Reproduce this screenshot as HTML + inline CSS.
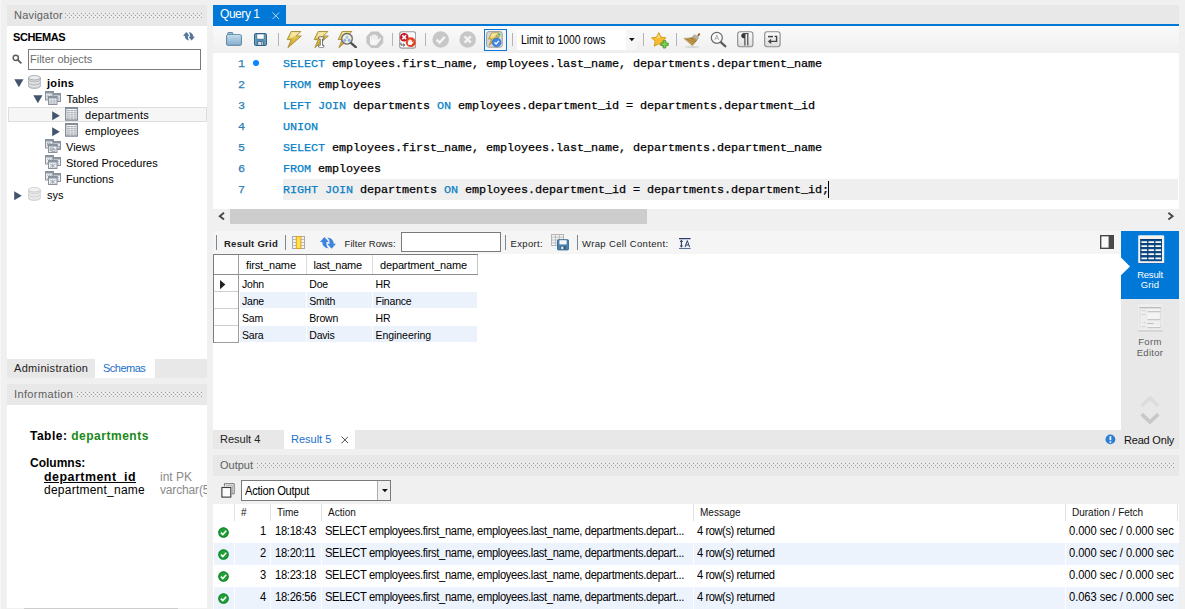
<!DOCTYPE html>
<html><head><meta charset="utf-8">
<style>
*{box-sizing:border-box;margin:0;padding:0}
html,body{width:1185px;height:609px;overflow:hidden;background:#f0f0f0;font-family:"Liberation Sans","DejaVu Sans",sans-serif;font-size:11px;color:#000}
.a{position:absolute;white-space:nowrap}
.t{position:absolute;white-space:nowrap;line-height:14px;height:14px}
.hdr{background:#e8e8e8}
.dots{position:absolute;height:7px;background-image:radial-gradient(circle,#bdbdbd 0.6px,transparent 0.8px),radial-gradient(circle,#bdbdbd 0.6px,transparent 0.8px);background-size:4px 4px;background-position:0 0,2px 2px}
.code{-webkit-text-stroke:.25px currentColor;font-family:"Liberation Mono","DejaVu Sans Mono",monospace;font-size:11.8px;letter-spacing:-0.08px;line-height:21px;height:21px;position:absolute;white-space:pre;left:283px;color:#000}
.k{color:#067fc8}
.ln{-webkit-text-stroke:.25px currentColor;position:absolute;font-family:"Liberation Mono",monospace;font-size:11.8px;line-height:21px;height:21px;left:237.5px;color:#2b7fb5;width:8px;text-align:center}
.g{position:absolute;white-space:nowrap;line-height:17px;height:17px;font-size:10.5px;letter-spacing:-.2px}
.h{font-size:11px;top:257px}
.oh{font-size:10px;top:506px;color:#111}
.i{font-size:12px;line-height:16px;height:16px}
.s{left:1121px;width:58px;text-align:center;font-size:9.5px}
.r{font-size:9.5px;top:237px;color:#222}
.o{position:absolute;white-space:nowrap;line-height:22px;height:22px;font-size:12px;letter-spacing:-0.3px;transform-origin:0 50%;transform:scaleX(.93)}
</style></head><body>
<!-- LEFT PANEL -->
<div class="a hdr" style="left:7px;top:5px;width:200px;height:21px"></div>
<div class="t" style="left:14px;top:8px;color:#5e5e5e;letter-spacing:.2px">Navigator</div>
<svg class="a" style="left:65px;top:13px" width="137" height="5"><defs><pattern id="d1" width="4" height="4" patternUnits="userSpaceOnUse"><rect x="0" y="0" width="1" height="1" fill="#9c9c9c"/><rect x="2" y="2" width="1" height="1" fill="#9c9c9c"/><rect x="2" y="0" width="1" height="1" fill="#f7f7f7"/><rect x="0" y="2" width="1" height="1" fill="#f7f7f7"/></pattern></defs><rect width="137" height="5" fill="url(#d1)"/></svg>
<div class="a" style="left:7px;top:26px;width:200px;height:333px;background:#fff"></div>
<div class="t" style="left:13px;top:30px;font-weight:bold;letter-spacing:-.4px">SCHEMAS</div>
<div class="a" style="left:28px;top:49px;width:173px;height:21px;border:1px solid #7a7a7a;background:#fff"></div>
<div class="t" style="left:30px;top:52px;color:#6d6d6d">Filter objects</div>
<!-- tree -->
<div class="a" style="left:8px;top:107px;width:199px;height:15px;background:#f6f6f6;border:1px solid #dedede"></div>
<div class="t" style="left:47px;top:76px;font-weight:bold;letter-spacing:.3px">joins</div>
<div class="t" style="left:66.5px;top:92px">Tables</div>
<div class="t" style="left:85px;top:108px;letter-spacing:.27px">departments</div>
<div class="t" style="left:85px;top:124px;letter-spacing:.1px">employees</div>
<div class="t" style="left:66px;top:140px">Views</div>
<div class="t" style="left:66px;top:156px">Stored Procedures</div>
<div class="t" style="left:66px;top:172px">Functions</div>
<div class="t" style="left:47px;top:188px">sys</div>
<!-- left tabs -->
<div class="a hdr" style="left:7px;top:359px;width:200px;height:19px"></div>
<div class="a" style="left:95px;top:359px;width:60px;height:19px;background:#fff"></div>
<div class="t" style="left:14px;top:361px;color:#222;letter-spacing:.33px">Administration</div>
<div class="t" style="left:103px;top:361px;color:#1a6fc9;letter-spacing:-.5px">Schemas</div>
<div class="a hdr" style="left:7px;top:384px;width:200px;height:21px"></div>
<div class="t" style="left:14px;top:387px;color:#5e5e5e;letter-spacing:.38px">Information</div>
<svg class="a" style="left:77px;top:392px" width="125" height="5"><defs><pattern id="d2" width="4" height="4" patternUnits="userSpaceOnUse"><rect x="0" y="0" width="1" height="1" fill="#9c9c9c"/><rect x="2" y="2" width="1" height="1" fill="#9c9c9c"/><rect x="2" y="0" width="1" height="1" fill="#f7f7f7"/><rect x="0" y="2" width="1" height="1" fill="#f7f7f7"/></pattern></defs><rect width="125" height="5" fill="url(#d2)"/></svg>
<div class="a" style="left:7px;top:405px;width:200px;height:204px;background:#fff;overflow:hidden">
  <div class="t i" style="left:23px;top:22.5px;font-weight:bold;letter-spacing:.5px">Table: <span style="color:#178a17">departments</span></div>
  <div class="t i" style="left:23px;top:50.2px;font-weight:bold">Columns:</div>
  <div class="t i" style="left:37px;top:64.2px;font-weight:bold;text-decoration:underline;letter-spacing:.5px;transform-origin:0 0;transform:scaleX(1.032)">department_id</div>
  <div class="t i" style="left:37px;top:77.2px;letter-spacing:.24px">department_name</div>
  <div class="t i" style="left:153px;top:64.2px;color:#8a8a8a">int PK</div>
  <div class="t i" style="left:153px;top:77.2px;color:#8a8a8a;letter-spacing:-.15px">varchar(50)</div>
</div>
<div class="a" style="left:7px;top:608px;width:200px;height:1px;background:#f0f0f0"></div><div class="a" style="left:24px;top:608px;width:154px;height:1px;background:#cdcdcd"></div><div class="a" style="left:0;top:0;width:1px;height:609px;background:#f6f6f6"></div>

<!-- MAIN -->
<div class="a hdr" style="left:213px;top:5px;width:966px;height:19px"></div>
<div class="a" style="left:213px;top:5px;width:73px;height:19px;background:#0078d7"></div>
<div class="a" style="left:213px;top:24px;width:966px;height:2px;background:#0078d7"></div>
<div class="t" style="left:220px;top:7px;color:#fff;font-size:12px;letter-spacing:-.45px">Query 1</div>
<div class="a" style="left:213px;top:26px;width:966px;height:27px;background:linear-gradient(#fafafa,#efefef)"></div>
<!-- editor -->
<div class="a" style="left:213px;top:53px;width:966px;height:156px;background:#fff"></div>
<div class="a" style="left:283px;top:179px;width:895px;height:21px;background:#efefef"></div>
<div class="ln" style="top:54px">1</div><div class="ln" style="top:75px">2</div><div class="ln" style="top:96px">3</div><div class="ln" style="top:117px">4</div><div class="ln" style="top:138px">5</div><div class="ln" style="top:159px">6</div><div class="ln" style="top:180px">7</div>
<div class="a" style="left:253px;top:60px;width:6px;height:6px;border-radius:3px;background:#0a84ff"></div>
<div class="code" style="top:54px"><span class="k">SELECT</span> employees.first_name, employees.last_name, departments.department_name</div>
<div class="code" style="top:75px"><span class="k">FROM</span> employees</div>
<div class="code" style="top:96px"><span class="k">LEFT JOIN</span> departments <span class="k">ON</span> employees.department_id = departments.department_id</div>
<div class="code" style="top:117px"><span class="k">UNION</span></div>
<div class="code" style="top:138px"><span class="k">SELECT</span> employees.first_name, employees.last_name, departments.department_name</div>
<div class="code" style="top:159px"><span class="k">FROM</span> employees</div>
<div class="code" style="top:180px"><span class="k">RIGHT JOIN</span> departments <span class="k">ON</span> employees.department_id = departments.department_id;</div>
<div class="a" style="left:828px;top:181px;width:1px;height:17px;background:#000"></div>
<!-- h scrollbar -->
<div class="a" style="left:230px;top:209px;width:417px;height:15px;background:#cdcdcd"></div>
<!-- result toolbar -->
<div class="a" style="left:213px;top:231px;width:908px;height:23px;background:#f5f5f5"></div>
<div class="a" style="left:216px;top:235px;width:1px;height:15px;background:#7a8794"></div>
<div class="a" style="left:285px;top:235px;width:1px;height:15px;background:#7a8794"></div>
<div class="t r" style="left:224px;font-weight:bold;letter-spacing:.25px">Result Grid</div>
<div class="t r" style="left:344.5px;letter-spacing:.08px">Filter Rows:</div>
<div class="a" style="left:401px;top:232px;width:100px;height:20px;border:1px solid #7a7a7a;background:#fff"></div>
<div class="a" style="left:505px;top:235px;width:1px;height:15px;background:#7a8794"></div>
<div class="t r" style="left:510.5px;letter-spacing:.35px">Export:</div>
<div class="a" style="left:577px;top:235px;width:1px;height:15px;background:#7a8794"></div>
<div class="t r" style="left:582px;letter-spacing:.35px">Wrap Cell Content:</div>
<!-- grid area -->
<div class="a" style="left:213px;top:254px;width:908px;height:176px;background:#fff"></div>
<div class="a" style="left:213px;top:254px;width:265px;height:1px;background:#7d7d7d"></div>
<div class="a" style="left:213px;top:274px;width:265px;height:1px;background:#8e8e8e"></div>
<div class="a" style="left:213px;top:254px;width:1px;height:89px;background:#7d7d7d"></div>
<div class="a" style="left:238px;top:255px;width:1px;height:88px;background:#9c9c9c"></div>
<div class="a" style="left:306px;top:255px;width:1px;height:19px;background:#dcdcdc"></div>
<div class="a" style="left:372px;top:255px;width:1px;height:19px;background:#dcdcdc"></div>
<div class="a" style="left:477px;top:255px;width:1px;height:19px;background:#c8c8c8"></div>
<div class="a" style="left:214px;top:291px;width:24px;height:1px;background:#cfcfcf"></div>
<div class="a" style="left:214px;top:308px;width:24px;height:1px;background:#cfcfcf"></div>
<div class="a" style="left:214px;top:325px;width:24px;height:1px;background:#cfcfcf"></div>
<div class="a" style="left:214px;top:342px;width:24px;height:1px;background:#9c9c9c"></div>
<div class="a" style="left:239.5px;top:292px;width:66.5px;height:16px;background:#ecf2fc"></div>
<div class="a" style="left:307px;top:292px;width:65px;height:16px;background:#ecf2fc"></div>
<div class="a" style="left:373px;top:292px;width:104px;height:16px;background:#ecf2fc"></div>
<div class="a" style="left:239.5px;top:326px;width:66.5px;height:16px;background:#ecf2fc"></div>
<div class="a" style="left:307px;top:326px;width:65px;height:16px;background:#ecf2fc"></div>
<div class="a" style="left:373px;top:326px;width:104px;height:16px;background:#ecf2fc"></div>
<div class="g h" style="left:246px;letter-spacing:-.15px">first_name</div><div class="g h" style="left:313.5px;letter-spacing:-.28px">last_name</div><div class="g h" style="left:380px;letter-spacing:-.15px">department_name</div>
<div class="g" style="left:242px;top:276px">John</div><div class="g" style="left:309.3px;top:276px">Doe</div><div class="g" style="left:375.5px;top:276px">HR</div>
<div class="g" style="left:242px;top:293px">Jane</div><div class="g" style="left:309.3px;top:293px">Smith</div><div class="g" style="left:375.5px;top:293px">Finance</div>
<div class="g" style="left:242px;top:310px">Sam</div><div class="g" style="left:309.3px;top:310px">Brown</div><div class="g" style="left:375.5px;top:310px">HR</div>
<div class="g" style="left:242px;top:327px">Sara</div><div class="g" style="left:309.3px;top:327px">Davis</div><div class="g" style="left:375.5px;top:327px;letter-spacing:-.05px">Engineering</div>
<!-- side panel -->
<div class="a hdr" style="left:1121px;top:231px;width:58px;height:199px"></div>
<div class="a" style="left:1121px;top:231px;width:58px;height:68px;background:#0078d7"></div>
<div class="t s" style="top:267.7px;color:#fff;letter-spacing:-.2px">Result</div>
<div class="t s" style="top:277.6px;color:#fff;letter-spacing:.1px">Grid</div>
<div class="t s" style="top:334.7px;color:#5c5c5c;letter-spacing:.37px">Form</div>
<div class="t s" style="top:345.6px;color:#5c5c5c;letter-spacing:.28px">Editor</div>
<!-- result tabs -->
<div class="a hdr" style="left:213px;top:430px;width:966px;height:19px"></div>
<div class="a" style="left:284px;top:430px;width:71px;height:19px;background:#fff"></div>
<div class="t" style="left:220px;top:432px;color:#222">Result 4</div>
<div class="t" style="left:291px;top:432px;color:#1a6fc9">Result 5</div>
<div class="t" style="left:1124px;top:433px;color:#111;letter-spacing:-.2px">Read Only</div>
<!-- output -->
<div class="a hdr" style="left:213px;top:455px;width:966px;height:21px"></div>
<div class="t" style="left:220px;top:458px;color:#5e5e5e">Output</div>
<svg class="a" style="left:257px;top:463px" width="918" height="5"><defs><pattern id="d3" width="4" height="4" patternUnits="userSpaceOnUse"><rect x="0" y="0" width="1" height="1" fill="#9c9c9c"/><rect x="2" y="2" width="1" height="1" fill="#9c9c9c"/><rect x="2" y="0" width="1" height="1" fill="#f7f7f7"/><rect x="0" y="2" width="1" height="1" fill="#f7f7f7"/></pattern></defs><rect width="918" height="5" fill="url(#d3)"/></svg>
<div class="a" style="left:241px;top:480px;width:150px;height:21px;border:1px solid #7a7a7a;background:#fff"></div>
<div class="a" style="left:377px;top:481px;width:13px;height:19px;border-left:1px solid #adadad;background:#f0f0f0"></div>
<div class="o" style="left:245px;top:481px;line-height:21px;height:21px">Action Output</div>
<div class="a" style="left:213px;top:504px;width:966px;height:105px;background:#fff"></div>
<div class="a" style="left:214px;top:543px;width:965px;height:22px;background:#edf3fc"></div>
<div class="a" style="left:214px;top:587px;width:965px;height:22px;background:#edf3fc"></div>
<!-- output table -->
<div class="a" style="left:234px;top:504px;width:1px;height:17px;background:#e2e2e2"></div>
<div class="a" style="left:270px;top:504px;width:1px;height:17px;background:#e2e2e2"></div>
<div class="a" style="left:321px;top:504px;width:1px;height:17px;background:#e2e2e2"></div>
<div class="a" style="left:693px;top:504px;width:1px;height:17px;background:#e2e2e2"></div>
<div class="a" style="left:1065px;top:504px;width:1px;height:17px;background:#e2e2e2"></div>
<div class="a" style="left:1177px;top:504px;width:1px;height:17px;background:#e2e2e2"></div>
<div class="a" style="left:234px;top:521px;width:1px;height:88px;background:#fff"></div>
<div class="a" style="left:270px;top:521px;width:1px;height:88px;background:#fff"></div>
<div class="a" style="left:321px;top:521px;width:1px;height:88px;background:#fff"></div>
<div class="a" style="left:693px;top:521px;width:1px;height:88px;background:#fff"></div>
<div class="a" style="left:1065px;top:521px;width:1px;height:88px;background:#fff"></div>
<div class="t oh" style="left:241px">#</div>
<div class="t oh" style="left:277px">Time</div>
<div class="t oh" style="left:328px">Action</div>
<div class="t oh" style="left:700px">Message</div>
<div class="t oh" style="left:1072px">Duration / Fetch</div>
<svg class="a" style="left:218px;top:527px" width="11" height="11" viewBox="0 0 11 11"><circle cx="5.5" cy="5.5" r="5.3" fill="#21a038"/><circle cx="5.5" cy="5.5" r="4.6" fill="none" stroke="#127a26" stroke-width=".8"/><path d="M2.9 5.6 L4.8 7.5 L8.2 3.8" fill="none" stroke="#fff" stroke-width="1.6"/></svg>
<div class="o" style="left:236px;top:520px;width:30px;text-align:right;transform-origin:100% 50%">1</div>
<div class="o" style="left:274.5px;top:520px;letter-spacing:-.3px">18:18:43</div>
<div class="o" style="left:325px;top:520px;letter-spacing:-.357px">SELECT employees.first_name, employees.last_name, departments.depart...</div>
<div class="o" style="left:697px;top:520px;letter-spacing:-.468px">4 row(s) returned</div>
<div class="o" style="left:1069px;top:520px;letter-spacing:-.067px">0.000 sec / 0.000 sec</div>
<svg class="a" style="left:218px;top:549px" width="11" height="11" viewBox="0 0 11 11"><circle cx="5.5" cy="5.5" r="5.3" fill="#21a038"/><circle cx="5.5" cy="5.5" r="4.6" fill="none" stroke="#127a26" stroke-width=".8"/><path d="M2.9 5.6 L4.8 7.5 L8.2 3.8" fill="none" stroke="#fff" stroke-width="1.6"/></svg>
<div class="o" style="left:236px;top:542px;width:30px;text-align:right;transform-origin:100% 50%">2</div>
<div class="o" style="left:274.5px;top:542px;letter-spacing:-.3px">18:20:11</div>
<div class="o" style="left:325px;top:542px;letter-spacing:-.357px">SELECT employees.first_name, employees.last_name, departments.depart...</div>
<div class="o" style="left:697px;top:542px;letter-spacing:-.468px">4 row(s) returned</div>
<div class="o" style="left:1069px;top:542px;letter-spacing:-.067px">0.000 sec / 0.000 sec</div>
<svg class="a" style="left:218px;top:571px" width="11" height="11" viewBox="0 0 11 11"><circle cx="5.5" cy="5.5" r="5.3" fill="#21a038"/><circle cx="5.5" cy="5.5" r="4.6" fill="none" stroke="#127a26" stroke-width=".8"/><path d="M2.9 5.6 L4.8 7.5 L8.2 3.8" fill="none" stroke="#fff" stroke-width="1.6"/></svg>
<div class="o" style="left:236px;top:564px;width:30px;text-align:right;transform-origin:100% 50%">3</div>
<div class="o" style="left:274.5px;top:564px;letter-spacing:-.3px">18:23:18</div>
<div class="o" style="left:325px;top:564px;letter-spacing:-.357px">SELECT employees.first_name, employees.last_name, departments.depart...</div>
<div class="o" style="left:697px;top:564px;letter-spacing:-.468px">4 row(s) returned</div>
<div class="o" style="left:1069px;top:564px;letter-spacing:-.067px">0.000 sec / 0.000 sec</div>
<svg class="a" style="left:218px;top:593px" width="11" height="11" viewBox="0 0 11 11"><circle cx="5.5" cy="5.5" r="5.3" fill="#21a038"/><circle cx="5.5" cy="5.5" r="4.6" fill="none" stroke="#127a26" stroke-width=".8"/><path d="M2.9 5.6 L4.8 7.5 L8.2 3.8" fill="none" stroke="#fff" stroke-width="1.6"/></svg>
<div class="o" style="left:236px;top:586px;width:30px;text-align:right;transform-origin:100% 50%">4</div>
<div class="o" style="left:274.5px;top:586px;letter-spacing:-.3px">18:26:56</div>
<div class="o" style="left:325px;top:586px;letter-spacing:-.357px">SELECT employees.first_name, employees.last_name, departments.depart...</div>
<div class="o" style="left:697px;top:586px;letter-spacing:-.468px">4 row(s) returned</div>
<div class="o" style="left:1069px;top:586px;letter-spacing:-.067px">0.063 sec / 0.000 sec</div>
<!--ICONS-->
<svg class="a" style="left:13.7px;top:79px" width="10" height="9" viewBox="0 0 10 9"><path d="M0.3 0.3 L9.5 0.3 L4.9 8.2 Z" fill="#44546f"/></svg>
<svg class="a" style="left:32.7px;top:95px" width="10" height="9" viewBox="0 0 10 9"><path d="M0.3 0.3 L9.5 0.3 L4.9 8.2 Z" fill="#44546f"/></svg>
<svg class="a" style="left:52px;top:110.7px" width="9" height="10" viewBox="0 0 9 10"><path d="M0.2 0.2 L7.8 4.7 L0.2 9.2 Z" fill="#44546f"/></svg>
<svg class="a" style="left:52px;top:126.7px" width="9" height="10" viewBox="0 0 9 10"><path d="M0.2 0.2 L7.8 4.7 L0.2 9.2 Z" fill="#44546f"/></svg>
<svg class="a" style="left:14px;top:190.7px" width="9" height="10" viewBox="0 0 9 10"><path d="M0.2 0.2 L7.8 4.7 L0.2 9.2 Z" fill="#44546f"/></svg>
<svg class="a" style="left:27.6px;top:75px" width="13" height="14" viewBox="0 0 13 14"><path d="M0.5 2.7 V11 C0.5 12.5 3.2 13.4 6.4 13.4 C9.6 13.4 12.3 12.5 12.3 11 V2.7 Z" fill="#d4d6d8" stroke="#a4a8ad" stroke-width=".9"/><path d="M0.5 4.6 C0.5 6.1 3.2 7.0 6.4 7.0 C9.6 7.0 12.3 6.1 12.3 4.6" fill="none" stroke="#a4a8ad" stroke-width=".9"/><path d="M0.5 5.5 C0.5 7.0 3.2 7.9 6.4 7.9 C9.6 7.9 12.3 7.0 12.3 5.5" fill="none" stroke="#f6f6f6" stroke-width=".7"/><path d="M0.5 7.8 C0.5 9.3 3.2 10.2 6.4 10.2 C9.6 10.2 12.3 9.3 12.3 7.8" fill="none" stroke="#a4a8ad" stroke-width=".9"/><path d="M0.5 8.7 C0.5 10.2 3.2 11.1 6.4 11.1 C9.6 11.1 12.3 10.2 12.3 8.7" fill="none" stroke="#f6f6f6" stroke-width=".7"/><ellipse cx="6.4" cy="2.7" rx="5.9" ry="2.2" fill="#ececec" stroke="#a4a8ad" stroke-width=".9"/></svg>
<svg class="a" style="left:27.8px;top:187px" width="13" height="14" viewBox="0 0 13 14"><path d="M0.5 2.7 V11 C0.5 12.5 3.2 13.4 6.4 13.4 C9.6 13.4 12.3 12.5 12.3 11 V2.7 Z" fill="#e4e4e4" stroke="#cdcdcd" stroke-width=".9"/><path d="M0.5 4.6 C0.5 6.1 3.2 7.0 6.4 7.0 C9.6 7.0 12.3 6.1 12.3 4.6" fill="none" stroke="#cdcdcd" stroke-width=".9"/><path d="M0.5 5.5 C0.5 7.0 3.2 7.9 6.4 7.9 C9.6 7.9 12.3 7.0 12.3 5.5" fill="none" stroke="#f6f6f6" stroke-width=".7"/><path d="M0.5 7.8 C0.5 9.3 3.2 10.2 6.4 10.2 C9.6 10.2 12.3 9.3 12.3 7.8" fill="none" stroke="#cdcdcd" stroke-width=".9"/><path d="M0.5 8.7 C0.5 10.2 3.2 11.1 6.4 11.1 C9.6 11.1 12.3 10.2 12.3 8.7" fill="none" stroke="#f6f6f6" stroke-width=".7"/><ellipse cx="6.4" cy="2.7" rx="5.9" ry="2.2" fill="#f2f2f2" stroke="#cdcdcd" stroke-width=".9"/></svg>
<svg class="a" style="left:45px;top:91px" width="16" height="14" viewBox="0 0 16 14"><rect x="0.5" y="0.5" width="8" height="8.5" fill="#eceef1" stroke="#8a929e" stroke-width="1"/><rect x="0.5" y="0.5" width="8" height="1.6" fill="#8b94a1" stroke="#8a929e" stroke-width=".6"/><path d="M1 5.2 H8" stroke="#aab0b9" stroke-width=".7"/><path d="M3.0 3 V8.5" stroke="#aab0b9" stroke-width=".7"/><path d="M1 7.3 H8" stroke="#aab0b9" stroke-width=".7"/><path d="M6.0 3 V8.5" stroke="#aab0b9" stroke-width=".7"/><rect x="8.0" y="2.5" width="7.5" height="8" fill="#eceef1" stroke="#8a929e" stroke-width="1"/><rect x="8.0" y="2.5" width="7.5" height="1.6" fill="#8b94a1" stroke="#8a929e" stroke-width=".6"/><path d="M8.5 7.0 H15.0" stroke="#aab0b9" stroke-width=".7"/><path d="M10.3 5 V10" stroke="#aab0b9" stroke-width=".7"/><path d="M8.5 9.0 H15.0" stroke="#aab0b9" stroke-width=".7"/><path d="M13.2 5 V10" stroke="#aab0b9" stroke-width=".7"/><rect x="3.5" y="5.5" width="8.5" height="8" fill="#eceef1" stroke="#8a929e" stroke-width="1"/><rect x="3.5" y="5.5" width="8.5" height="1.6" fill="#8b94a1" stroke="#8a929e" stroke-width=".6"/><path d="M4 10.0 H11.5" stroke="#aab0b9" stroke-width=".7"/><path d="M6.2 8 V13" stroke="#aab0b9" stroke-width=".7"/><path d="M4 12.0 H11.5" stroke="#aab0b9" stroke-width=".7"/><path d="M9.3 8 V13" stroke="#aab0b9" stroke-width=".7"/></svg>
<svg class="a" style="left:45px;top:139px" width="16" height="14" viewBox="0 0 16 14"><rect x="0.5" y="0.5" width="8" height="8.5" fill="#eceef1" stroke="#8a929e" stroke-width="1"/><rect x="0.5" y="0.5" width="8" height="1.6" fill="#8b94a1" stroke="#8a929e" stroke-width=".6"/><rect x="2.2" y="4" width="3" height="2.4" fill="none" stroke="#838c98" stroke-width=".7"/><rect x="4" y="5.2" width="3" height="2.4" fill="#e3e6ea" stroke="#838c98" stroke-width=".7"/><rect x="8.0" y="2.5" width="7.5" height="8" fill="#eceef1" stroke="#8a929e" stroke-width="1"/><rect x="8.0" y="2.5" width="7.5" height="1.6" fill="#8b94a1" stroke="#8a929e" stroke-width=".6"/><rect x="9.7" y="6" width="3" height="2.4" fill="none" stroke="#838c98" stroke-width=".7"/><rect x="11.5" y="7.2" width="3" height="2.4" fill="#e3e6ea" stroke="#838c98" stroke-width=".7"/><rect x="3.5" y="5.5" width="8.5" height="8" fill="#eceef1" stroke="#8a929e" stroke-width="1"/><rect x="3.5" y="5.5" width="8.5" height="1.6" fill="#8b94a1" stroke="#8a929e" stroke-width=".6"/><rect x="5.2" y="9" width="3" height="2.4" fill="none" stroke="#838c98" stroke-width=".7"/><rect x="7" y="10.2" width="3" height="2.4" fill="#e3e6ea" stroke="#838c98" stroke-width=".7"/></svg>
<svg class="a" style="left:45px;top:155px" width="16" height="14" viewBox="0 0 16 14"><rect x="0.5" y="0.5" width="8" height="8.5" fill="#eceef1" stroke="#8a929e" stroke-width="1"/><rect x="0.5" y="0.5" width="8" height="1.6" fill="#8b94a1" stroke="#8a929e" stroke-width=".6"/><path d="M2 4 L7 8.0 M7 4 L2 8.0 M4.5 3.5 V8.5" stroke="#9aa2ad" stroke-width=".8"/><rect x="8.0" y="2.5" width="7.5" height="8" fill="#eceef1" stroke="#8a929e" stroke-width="1"/><rect x="8.0" y="2.5" width="7.5" height="1.6" fill="#8b94a1" stroke="#8a929e" stroke-width=".6"/><path d="M9.5 6 L14.0 9.5 M14.0 6 L9.5 9.5 M11.75 5.5 V10" stroke="#9aa2ad" stroke-width=".8"/><rect x="3.5" y="5.5" width="8.5" height="8" fill="#eceef1" stroke="#8a929e" stroke-width="1"/><rect x="3.5" y="5.5" width="8.5" height="1.6" fill="#8b94a1" stroke="#8a929e" stroke-width=".6"/><path d="M5 9 L10.5 12.5 M10.5 9 L5 12.5 M7.75 8.5 V13" stroke="#9aa2ad" stroke-width=".8"/></svg>
<svg class="a" style="left:45px;top:171px" width="16" height="14" viewBox="0 0 16 14"><rect x="0.5" y="0.5" width="8" height="8.5" fill="#eceef1" stroke="#8a929e" stroke-width="1"/><rect x="0.5" y="0.5" width="8" height="1.6" fill="#8b94a1" stroke="#8a929e" stroke-width=".6"/><path d="M2 4 L7 8.0 M7 4 L2 8.0 M4.5 3.5 V8.5" stroke="#9aa2ad" stroke-width=".8"/><rect x="8.0" y="2.5" width="7.5" height="8" fill="#eceef1" stroke="#8a929e" stroke-width="1"/><rect x="8.0" y="2.5" width="7.5" height="1.6" fill="#8b94a1" stroke="#8a929e" stroke-width=".6"/><path d="M9.5 6 L14.0 9.5 M14.0 6 L9.5 9.5 M11.75 5.5 V10" stroke="#9aa2ad" stroke-width=".8"/><rect x="3.5" y="5.5" width="8.5" height="8" fill="#eceef1" stroke="#8a929e" stroke-width="1"/><rect x="3.5" y="5.5" width="8.5" height="1.6" fill="#8b94a1" stroke="#8a929e" stroke-width=".6"/><path d="M5 9 L10.5 12.5 M10.5 9 L5 12.5 M7.75 8.5 V13" stroke="#9aa2ad" stroke-width=".8"/></svg>
<svg class="a" style="left:65px;top:107.2px" width="13" height="14" viewBox="0 0 13 14"><rect x="0.7" y="0.7" width="11.6" height="12.4" fill="#fafafa" stroke="#7f8896" stroke-width="1.3"/><rect x="0.7" y="0.3" width="11.6" height="1.6" fill="#7f8896"/><path d="M2 3.7 H11" stroke="#8f97a3" stroke-width="1"/><path d="M2 5.8 H11" stroke="#8f97a3" stroke-width="1"/><path d="M2 7.9 H11" stroke="#8f97a3" stroke-width="1"/><path d="M2 10 H11" stroke="#8f97a3" stroke-width="1"/><path d="M2 11.9 H11" stroke="#8f97a3" stroke-width="1"/><path d="M5.2 3 V12.5 M8.4 3 V12.5" stroke="#f0f1f3" stroke-width=".6"/></svg>
<svg class="a" style="left:65px;top:123.2px" width="13" height="14" viewBox="0 0 13 14"><rect x="0.7" y="0.7" width="11.6" height="12.4" fill="#fafafa" stroke="#7f8896" stroke-width="1.3"/><rect x="0.7" y="0.3" width="11.6" height="1.6" fill="#7f8896"/><path d="M2 3.7 H11" stroke="#8f97a3" stroke-width="1"/><path d="M2 5.8 H11" stroke="#8f97a3" stroke-width="1"/><path d="M2 7.9 H11" stroke="#8f97a3" stroke-width="1"/><path d="M2 10 H11" stroke="#8f97a3" stroke-width="1"/><path d="M2 11.9 H11" stroke="#8f97a3" stroke-width="1"/><path d="M5.2 3 V12.5 M8.4 3 V12.5" stroke="#f0f1f3" stroke-width=".6"/></svg>
<svg class="a" style="left:183px;top:31.8px" width="12" height="9" viewBox="0 0 12 9"><g fill="#56759a"><path d="M3.4 0 L0 3.7 L1.7 3.7 C1.7 6.4 3.5 8 6.4 8.4 C5 7 4.8 5.5 4.9 3.7 L6.6 3.7 Z"/><path transform="rotate(180 6 4.25)" d="M3.4 0 L0 3.7 L1.7 3.7 C1.7 6.4 3.5 8 6.4 8.4 C5 7 4.8 5.5 4.9 3.7 L6.6 3.7 Z"/></g></svg>
<svg class="a" style="left:12px;top:54px" width="10" height="10" viewBox="0 0 10 10"><circle cx="3.8" cy="3.8" r="2.6" fill="none" stroke="#5f5f5f" stroke-width="1.5"/><path d="M5.8 5.8 L8.8 8.8" stroke="#5f5f5f" stroke-width="1.9" stroke-linecap="round"/></svg>
<svg class="a" style="left:225px;top:31px" width="18" height="16" viewBox="0 0 18 16"><defs><linearGradient id="lg" x1="0" y1="0" x2="0" y2="1"><stop offset="0" stop-color="#f3e08a"/><stop offset=".5" stop-color="#dcbc3c"/><stop offset="1" stop-color="#c9a42a"/></linearGradient><linearGradient id="fg" x1="0" y1="0" x2="0" y2="1"><stop offset="0" stop-color="#c3dbec"/><stop offset="1" stop-color="#86aece"/></linearGradient><linearGradient id="bg" x1="0" y1="0" x2="0" y2="1"><stop offset="0" stop-color="#fdfdfd"/><stop offset="1" stop-color="#dcdcdc"/></linearGradient></defs><path d="M2.7 3.8 L2.7 2.3 Q2.7 1.5 3.5 1.5 L7 1.5 Q7.8 1.5 7.8 2.3 L7.8 3.8" fill="#9dc0da" stroke="#4f7f9f" stroke-width=".9"/><rect x="1.6" y="3.7" width="14.8" height="10.6" rx="1.1" fill="url(#fg)" stroke="#4f7f9f" stroke-width=".95"/><path d="M2.4 4.7 H15.6" stroke="#d9e9f4" stroke-width=".7"/></svg>
<svg class="a" style="left:254px;top:33px" width="13" height="13" viewBox="0 0 13 13"><rect x=".5" y=".5" width="12" height="12" rx="1.2" fill="#5b8fb1" stroke="#2f6388" stroke-width="1"/><path d="M1.6 1.2 V11.6 M11.4 1.2 V11.6" stroke="#7ba7c4" stroke-width=".7"/><rect x="2.9" y="1.1" width="7.2" height="5" rx=".6" fill="#fdfdfd" stroke="#3b6f93" stroke-width=".5"/><rect x="3.6" y="8.4" width="6" height="3.8" rx=".5" fill="#2f6388"/><rect x="4.2" y="9" width="4.6" height="2.9" fill="#e4e6e8"/><rect x="6.9" y="9.3" width=".9" height="2.3" fill="#3a5c78"/></svg>
<div class="a" style="left:278px;top:33px;width:1px;height:13px;background:#b4b4b4"></div>
<div class="a" style="left:392px;top:33px;width:1px;height:13px;background:#b4b4b4"></div>
<div class="a" style="left:425px;top:33px;width:1px;height:13px;background:#b4b4b4"></div>
<div class="a" style="left:512px;top:33px;width:1px;height:13px;background:#b4b4b4"></div>
<div class="a" style="left:643px;top:33px;width:1px;height:13px;background:#b4b4b4"></div>
<div class="a" style="left:676px;top:33px;width:1px;height:13px;background:#b4b4b4"></div>
<svg class="a" style="left:286px;top:30.8px" width="16" height="17.5" viewBox="0 0 16 17.5"><g transform="translate(0 0) scale(1)"><path d="M5.1 0.5 L14.8 0.5 L10.4 5 L15.3 5 L1.9 16.7 L5.2 8.6 L1.2 8.6 Z" fill="url(#lg)" stroke="#a88a35" stroke-width=".9" stroke-linejoin="round"/><path d="M5.9 1.5 L12.6 1.5 L8.6 5.6 L3.4 7.4 Z" fill="#f8efba" opacity=".75"/></g></svg>
<svg class="a" style="left:313.3px;top:30.8px" width="16" height="17.5" viewBox="0 0 16 17.5"><g transform="translate(0 0) scale(1)"><path d="M5.1 0.5 L14.8 0.5 L10.4 5 L15.3 5 L1.9 16.7 L5.2 8.6 L1.2 8.6 Z" fill="url(#lg)" stroke="#a88a35" stroke-width=".9" stroke-linejoin="round"/><path d="M5.9 1.5 L12.6 1.5 L8.6 5.6 L3.4 7.4 Z" fill="#f8efba" opacity=".75"/></g><path d="M6.6 7 H10 M6.6 15.2 H10 M8.3 7 V15.2" stroke="#4a4a4a" stroke-width="2.8" stroke-linecap="round"/><path d="M6.6 7 H10 M6.6 15.2 H10 M8.3 7 V15.2" stroke="#fff" stroke-width="1.4" stroke-linecap="round"/></svg>
<svg class="a" style="left:337.4px;top:30.8px" width="20" height="17.5" viewBox="0 0 20 17.5"><g transform="translate(0 0) scale(1)"><path d="M5.1 0.5 L14.8 0.5 L10.4 5 L15.3 5 L1.9 16.7 L5.2 8.6 L1.2 8.6 Z" fill="url(#lg)" stroke="#a88a35" stroke-width=".9" stroke-linejoin="round"/><path d="M5.9 1.5 L12.6 1.5 L8.6 5.6 L3.4 7.4 Z" fill="#f8efba" opacity=".75"/></g><circle cx="10" cy="7.8" r="5.3" fill="#f4f1de" stroke="#686868" stroke-width="1.3"/><circle cx="10" cy="6" r="1.5" fill="#a9c6ea"/><circle cx="7.8" cy="9.3" r="1.5" fill="#8db3e3"/><circle cx="12.2" cy="9.3" r="1.5" fill="#8db3e3"/><path d="M8.4 7.6 L10 6.8 L11.6 7.6" fill="none" stroke="#9fb6d6" stroke-width=".7"/><path d="M14.2 12.2 L18.8 16.2" stroke="#505050" stroke-width="2.3" stroke-linecap="round"/></svg>
<svg class="a" style="left:365.7px;top:30.8px" width="18" height="17.5" viewBox="0 0 18 17.5"><path d="M5.3 0.5 L12.3 0.5 L17.2 5.4 L17.2 12 L12.3 16.9 L5.3 16.9 L0.4 12 L0.4 5.4 Z" fill="#c4c4c4"/><g transform="translate(-.3 .9) scale(.92)"><g fill="#f6f6f6"><rect x="4.6" y="4.3" width="1.9" height="6.4" rx=".95"/><rect x="6.9" y="2.7" width="1.9" height="8" rx=".95"/><rect x="9.2" y="2.7" width="1.9" height="8" rx=".95"/><rect x="11.4" y="3.9" width="1.8" height="6.8" rx=".9"/><path d="M4.6 8.6 H13.2 L15.2 6.9 Q16.1 6.3 16.6 7 Q16.9 7.6 16.3 8.3 L12.8 13.2 Q11.8 14.6 10.2 14.6 H8 Q4.6 14.6 4.6 11.4 Z"/></g></g></svg>
<svg class="a" style="left:399px;top:30.6px" width="17.4" height="18" viewBox="0 0 17.4 18"><rect x=".7" y=".7" width="16" height="16.4" rx="2.2" fill="#fbfbfb" stroke="#9a9a9a" stroke-width="1.1"/><path d="M2 11.6 V14 H5.4 M4.2 12.6 L5.8 14 L4.2 15.4" fill="none" stroke="#444" stroke-width=".9"/><circle cx="5.2" cy="6.2" r="4.3" fill="#c3182b"/><path d="M3.3 4.3 L7.1 8.1 M7.1 4.3 L3.3 8.1" stroke="#fff" stroke-width="1.6"/><circle cx="11.8" cy="11.2" r="4.9" fill="#e2421f"/><g transform="translate(6.7 7.1) scale(.48)"><g fill="#fff"><rect x="4.6" y="4.3" width="1.9" height="6.4" rx=".95"/><rect x="6.9" y="2.7" width="1.9" height="8" rx=".95"/><rect x="9.2" y="2.7" width="1.9" height="8" rx=".95"/><rect x="11.4" y="3.9" width="1.8" height="6.8" rx=".9"/><path d="M4.6 8.6 H13.2 L15.2 6.9 Q16.1 6.3 16.6 7 Q16.9 7.6 16.3 8.3 L12.8 13.2 Q11.8 14.6 10.2 14.6 H8 Q4.6 14.6 4.6 11.4 Z"/></g></g></svg>
<svg class="a" style="left:432px;top:31px" width="17.5" height="17.5" viewBox="0 0 17.5 17.5"><circle cx="8.7" cy="8.5" r="8.3" fill="#c7c7c7"/><path d="M4.6 8.6 L7.6 11.6 L12.8 5.9" fill="none" stroke="#f4f4f4" stroke-width="2.3"/></svg>
<svg class="a" style="left:458.8px;top:31px" width="17.5" height="17.5" viewBox="0 0 17.5 17.5"><circle cx="8.7" cy="8.5" r="8.3" fill="#c7c7c7"/><path d="M5.6 5.4 L11.8 11.6 M11.8 5.4 L5.6 11.6" fill="none" stroke="#f4f4f4" stroke-width="2.3"/></svg>
<div class="a" style="left:484px;top:29px;width:23px;height:22px;border:1.5px solid #0a78d6;background:#f4f4f4"></div>
<svg class="a" style="left:486.4px;top:31px" width="17" height="17" viewBox="0 0 17 17"><rect x=".6" y=".6" width="15.6" height="15.6" rx="2.4" fill="#d8d8d8" stroke="#9c9c9c" stroke-width="1"/><g transform="translate(1.6 1.4) scale(0.78)"><path d="M5.1 0.5 L14.8 0.5 L10.4 5 L15.3 5 L1.9 16.7 L5.2 8.6 L1.2 8.6 Z" fill="url(#lg)" stroke="#a88a35" stroke-width=".9" stroke-linejoin="round"/><path d="M5.9 1.5 L12.6 1.5 L8.6 5.6 L3.4 7.4 Z" fill="#f8efba" opacity=".75"/></g><circle cx="10.6" cy="11.4" r="4.4" fill="#3f86e4" stroke="#2a68c2" stroke-width=".6"/><path d="M8.5 11.4 L10.1 13 L12.8 9.9" fill="none" stroke="#fff" stroke-width="1.3"/><circle cx="13.3" cy="3.6" r="1.2" fill="#3ccf3c"/></svg>
<div class="a" style="left:517px;top:29.5px;width:120px;height:20.5px;background:#fff"></div><div class="a" style="left:626px;top:30px;width:11px;height:19.5px;background:#f6f6f6"></div>
<svg class="a" style="left:628.6px;top:38px" width="6" height="4" viewBox="0 0 6 4"><path d="M0 0 H5.6 L2.8 3.2 Z" fill="#111"/></svg>
<div class="t" style="left:521.4px;top:32.8px;font-size:12px;line-height:15px;height:15px;transform-origin:0 0;transform:scaleX(.868);color:#000">Limit to 1000 rows</div>
<svg class="a" style="left:650.6px;top:32.4px" width="18" height="17" viewBox="0 0 18 17"><path d="M7.8 0.6 L10 5.2 L15 5.8 L11.4 9.2 L12.4 14.2 L7.8 11.8 L3.2 14.2 L4.2 9.2 L0.6 5.8 L5.6 5.2 Z" fill="#f6bc30" stroke="#d4951a" stroke-width=".9" stroke-linejoin="round"/><path d="M7.8 2.2 L9.2 5.8 L5.8 6.4 Z" fill="#fbe08a"/><path d="M12.2 8.6 h2.6 v2.4 h2.4 v2.6 h-2.4 v2.4 h-2.6 v-2.4 h-2.4 v-2.6 h2.4 Z" fill="#7ccf52" stroke="#3f8f25" stroke-width=".8"/></svg>
<svg class="a" style="left:683px;top:32px" width="18" height="16" viewBox="0 0 18 16"><ellipse cx="9" cy="15" rx="7.6" ry=".7" fill="#cfcfcf"/><path d="M14.2 3.4 L15.6 1.6 Q16.4 .9 17 1.6 Q17.5 2.3 16.8 3 L15.2 4.4 Z" fill="#8b5a1e"/><path d="M11.2 2.6 L15.6 5.2 L13.8 8.4 L9.4 5.6 Z" fill="#b9b4aa" stroke="#8f8a80" stroke-width=".5"/><path d="M9.6 5.2 L14 8 L9.4 13.6 L1 6.4 Q6 6.6 9.6 5.2 Z" fill="#cfa95a" stroke="#a27f3a" stroke-width=".6"/><path d="M3.2 7.6 L10 6.2 M5 9.2 L11.6 7 M6.8 10.8 L12.8 8 M8.4 12.4 L13.4 8.8" stroke="#8f6a2a" stroke-width=".75"/></svg>
<svg class="a" style="left:710px;top:31px" width="18" height="17" viewBox="0 0 18 17"><circle cx="6.8" cy="6.8" r="5.5" fill="#fbfbfb" stroke="#6a6a6a" stroke-width="1.25"/><path d="M4.8 9 L6.8 3.9 L8.8 9 M5.6 7.3 H8" fill="none" stroke="#a8a8a8" stroke-width=".9"/><path d="M11 11.4 L15.4 15.4" stroke="#5a5a5a" stroke-width="2.1" stroke-linecap="round"/></svg>
<svg class="a" style="left:737px;top:31px" width="17" height="16.5" viewBox="0 0 17 16.5"><defs><linearGradient id="lg2" x1="0" y1="0" x2="0" y2="1"><stop offset="0" stop-color="#f3e08a"/><stop offset=".5" stop-color="#dcbc3c"/><stop offset="1" stop-color="#c9a42a"/></linearGradient><linearGradient id="fg2" x1="0" y1="0" x2="0" y2="1"><stop offset="0" stop-color="#c3dbec"/><stop offset="1" stop-color="#86aece"/></linearGradient><linearGradient id="bg2" x1="0" y1="0" x2="0" y2="1"><stop offset="0" stop-color="#fdfdfd"/><stop offset="1" stop-color="#dcdcdc"/></linearGradient></defs><rect x=".7" y=".7" width="15.2" height="15" rx="2.4" fill="url(#bg2)" stroke="#8a8a8a" stroke-width="1.1"/><path d="M5.6 2.7 H11.6" stroke="#3a3a3a" stroke-width="1"/><path d="M7.9 2.7 V14.4 M10.8 2.7 V14.4" stroke="#3a3a3a" stroke-width="1.1"/><path d="M8 2.4 H6.6 A2.4 2.4 0 0 0 6.6 7.3 H8 Z" fill="#3a3a3a"/></svg>
<svg class="a" style="left:764px;top:31px" width="17" height="16.5" viewBox="0 0 17 16.5"><defs><linearGradient id="lg3" x1="0" y1="0" x2="0" y2="1"><stop offset="0" stop-color="#f3e08a"/><stop offset=".5" stop-color="#dcbc3c"/><stop offset="1" stop-color="#c9a42a"/></linearGradient><linearGradient id="fg3" x1="0" y1="0" x2="0" y2="1"><stop offset="0" stop-color="#c3dbec"/><stop offset="1" stop-color="#86aece"/></linearGradient><linearGradient id="bg3" x1="0" y1="0" x2="0" y2="1"><stop offset="0" stop-color="#fdfdfd"/><stop offset="1" stop-color="#dcdcdc"/></linearGradient></defs><rect x=".7" y=".7" width="15.4" height="15" rx="2.4" fill="url(#bg3)" stroke="#8a8a8a" stroke-width="1.1"/><path d="M4 5.6 H9" stroke="#444" stroke-width="1.5"/><path d="M10.6 5.4 H12.6 V10.4 H6.4" fill="none" stroke="#444" stroke-width="1.4"/><path d="M7.2 7.8 L3.8 10.4 L7.2 13 Z" fill="#444"/></svg>
<svg class="a" style="left:272px;top:11.7px" width="7.6" height="7.6" viewBox="0 0 7.6 7.6"><path d="M0.5 0.5 L7.1 7.1 M7.1 0.5 L0.5 7.1" stroke="#cfe2f5" stroke-width="0.9"/></svg>
<svg class="a" style="left:340.5px;top:436px" width="7.8" height="7.8" viewBox="0 0 7.8 7.8"><path d="M0.5 0.5 L7.3 7.3 M7.3 0.5 L0.5 7.3" stroke="#4c4c4c" stroke-width="1"/></svg>
<svg class="a" style="left:292px;top:236px" width="13" height="13" viewBox="0 0 13 13"><rect x=".5" y=".5" width="12" height="12" fill="#f4f4f4" stroke="#a9a9a9" stroke-width="1"/><path d="M1 3.5 H12" stroke="#b5b5b5" stroke-width=".9"/><path d="M1 6.5 H12" stroke="#b5b5b5" stroke-width=".9"/><path d="M1 9.5 H12" stroke="#b5b5b5" stroke-width=".9"/><rect x="4.3" y=".5" width="4.6" height="12" fill="#ffe24a" stroke="#e0a020" stroke-width="1"/></svg>
<svg class="a" style="left:320px;top:237.4px" width="16" height="12" viewBox="0 0 16 12"><g fill="#3d84e2"><path d="M4.4 0 L0 5 L2.3 5 C2.3 8.6 4.6 10.8 8.6 11.4 C6.6 9.4 6.3 7.4 6.4 5 L8.8 5 Z"/><path transform="rotate(180 8 5.9)" d="M4.4 0 L0 5 L2.3 5 C2.3 8.6 4.6 10.8 8.6 11.4 C6.6 9.4 6.3 7.4 6.4 5 L8.8 5 Z"/></g></svg>
<svg class="a" style="left:551.4px;top:234.4px" width="18.5" height="16.5" viewBox="0 0 18.5 16.5"><rect x=".5" y=".5" width="12" height="11" fill="#f2f2f2" stroke="#b0b0b0" stroke-width=".9"/><path d="M.5 3.2 H12.5" stroke="#b8b8b8" stroke-width=".8"/><path d="M.5 6 H12.5" stroke="#b8b8b8" stroke-width=".8"/><path d="M.5 8.8 H12.5" stroke="#b8b8b8" stroke-width=".8"/><path d="M4.5 .5 V11.5" stroke="#b8b8b8" stroke-width=".8"/><path d="M8.5 .5 V11.5" stroke="#b8b8b8" stroke-width=".8"/><g transform="translate(6 5.2)"><rect x=".5" y=".5" width="11" height="10.2" rx=".8" fill="#4a82ab" stroke="#386c93" stroke-width=".9"/><rect x="2.4" y="1" width="7.2" height="4.2" fill="#f4f7fa"/><rect x="3.2" y="6.8" width="5.6" height="3.6" fill="#2f5f85"/><rect x="3.9" y="7.4" width="2.6" height="2.6" fill="#d9dde2"/></g></svg>
<svg class="a" style="left:679px;top:237.6px" width="12" height="11.5" viewBox="0 0 12 11.5"><path d="M0 .6 H11.6 M0 10.8 H11.6" stroke="#2d4272" stroke-width="1.1"/><path d="M2.4 2.4 V9" stroke="#2d4272" stroke-width="1.1"/><path d="M.7 4 L2.4 1.6 L4.1 4 Z M.7 7.4 L2.4 9.8 L4.1 7.4 Z" fill="#2d4272"/><path d="M6 9.2 L8.3 2.6 L10.6 9.2 M6.9 7 H9.7" fill="none" stroke="#2d4272" stroke-width="1"/></svg>
<svg class="a" style="left:1100px;top:235px" width="14" height="14" viewBox="0 0 14 14"><rect x=".7" y=".7" width="12.6" height="12.6" fill="#fafafa" stroke="#3c3c3c" stroke-width="1.3"/><rect x="8.6" y=".7" width="4.7" height="12.6" fill="#4a4a4a"/></svg>
<svg class="a" style="left:219.6px;top:279.8px" width="6" height="10" viewBox="0 0 6 10"><path d="M0 0 L5.4 4.6 L0 9.2 Z" fill="#222"/></svg>
<svg class="a" style="left:1121px;top:257px" width="10" height="19" viewBox="0 0 10 19"><path d="M0 0.6 L9 9.4 L0 18.2 Z" fill="#fff"/></svg>
<svg class="a" style="left:1137.6px;top:235px" width="27" height="29" viewBox="0 0 27 29"><rect x=".2" y=".2" width="26" height="28" rx="1.3" fill="#f5f2ee"/><path d="M.8 28.5 H25.6" stroke="#0a5bb0" stroke-width=".8"/><rect x="2.2" y="4" width="21.8" height="22.2" fill="#0b4b8c"/><path d="M2.2 4.6 H24" stroke="#063a70" stroke-width="1"/><rect x="3.4" y="6.20" width="5.7" height="1.9" rx=".4" fill="#fbf8f3"/><rect x="10.4" y="6.20" width="5.7" height="1.9" rx=".4" fill="#fbf8f3"/><rect x="17.4" y="6.20" width="5.7" height="1.9" rx=".4" fill="#fbf8f3"/><path d="M2.2 8.649999999999999 H24" stroke="#063a70" stroke-width="1"/><rect x="3.4" y="10.25" width="5.7" height="1.9" rx=".4" fill="#fbf8f3"/><rect x="10.4" y="10.25" width="5.7" height="1.9" rx=".4" fill="#fbf8f3"/><rect x="17.4" y="10.25" width="5.7" height="1.9" rx=".4" fill="#fbf8f3"/><path d="M2.2 12.7 H24" stroke="#063a70" stroke-width="1"/><rect x="3.4" y="14.30" width="5.7" height="1.9" rx=".4" fill="#fbf8f3"/><rect x="10.4" y="14.30" width="5.7" height="1.9" rx=".4" fill="#fbf8f3"/><rect x="17.4" y="14.30" width="5.7" height="1.9" rx=".4" fill="#fbf8f3"/><path d="M2.2 16.75 H24" stroke="#063a70" stroke-width="1"/><rect x="3.4" y="18.35" width="5.7" height="1.9" rx=".4" fill="#fbf8f3"/><rect x="10.4" y="18.35" width="5.7" height="1.9" rx=".4" fill="#fbf8f3"/><rect x="17.4" y="18.35" width="5.7" height="1.9" rx=".4" fill="#fbf8f3"/><path d="M2.2 20.799999999999997 H24" stroke="#063a70" stroke-width="1"/><rect x="3.4" y="22.40" width="5.7" height="1.9" rx=".4" fill="#fbf8f3"/><rect x="10.4" y="22.40" width="5.7" height="1.9" rx=".4" fill="#fbf8f3"/><rect x="17.4" y="22.40" width="5.7" height="1.9" rx=".4" fill="#fbf8f3"/></svg>
<svg class="a" style="left:1137.4px;top:303px" width="27" height="29" viewBox="0 0 27 29"><rect x=".4" y=".4" width="26" height="27.4" rx="1.4" fill="#eeeeee" stroke="#e2e2e2" stroke-width=".6"/><path d="M1 27.9 H25.8" stroke="#c6c6c6" stroke-width="1.1"/><path d="M2.4 4.7 H24.2" stroke="#b6b6b6" stroke-width="1.2"/><path d="M2.8 5 V25.6 M23.9 5 V25.6" stroke="#d9d9d9" stroke-width=".7"/><path d="M4.4 7.7 H9 M4.4 11.7 H9 M6.2 19.7 H9 M4.4 23.7 H9" stroke="#cdcdcd" stroke-width=".8"/><rect x="10.4" y="6.2" width="12.999999999999998" height="2.2" fill="#f4f4f4"/><path d="M10.4 8.700000000000001 H23.4" stroke="#b8b8b8" stroke-width=".9"/><path d="M23.4 6.2 V8.4" stroke="#d4d4d4" stroke-width=".6"/><rect x="10.4" y="10.2" width="12.999999999999998" height="6.199999999999999" fill="#f4f4f4"/><path d="M10.4 16.7 H23.4" stroke="#b8b8b8" stroke-width=".9"/><path d="M23.4 10.2 V16.4" stroke="#d4d4d4" stroke-width=".6"/><rect x="10.4" y="22.2" width="12.999999999999998" height="2.1999999999999993" fill="#f4f4f4"/><path d="M10.4 24.7 H23.4" stroke="#b8b8b8" stroke-width=".9"/><path d="M23.4 22.2 V24.4" stroke="#d4d4d4" stroke-width=".6"/><path d="M10.4 20.5 H16.6" stroke="#b8b8b8" stroke-width=".9"/></svg>
<svg class="a" style="left:1139.5px;top:394.6px" width="20" height="13" viewBox="0 0 20 13"><path d="M10 0.6 L19.6 9.6 L17 12.2 L10 5.6 L3 12.2 L0.4 9.6 Z" fill="#dcdcdc"/></svg>
<svg class="a" style="left:1139.5px;top:412.4px" width="20" height="13" viewBox="0 0 20 13"><path d="M10 12.4 L19.6 3.4 L17 0.8 L10 7.4 L3 0.8 L0.4 3.4 Z" fill="#c8c8c8"/></svg>
<svg class="a" style="left:1104.6px;top:433.6px" width="11" height="11" viewBox="0 0 11 11"><circle cx="5.4" cy="5.4" r="4.9" fill="#2d7fd6"/><path d="M5.4 2.3 V6.2" stroke="#fff" stroke-width="1.7"/><circle cx="5.4" cy="8.1" r=".95" fill="#fff"/></svg>
<svg class="a" style="left:220.6px;top:482.6px" width="14" height="15" viewBox="0 0 14 15"><path d="M3.4 3.4 V.7 H13.2 V10.8 H10.6" fill="none" stroke="#666" stroke-width=".9"/><path d="M5.4 3.4 V2.7 H11.4 V10.4" fill="none" stroke="#9a9a9a" stroke-width=".8"/><rect x=".9" y="4.5" width="8.9" height="9.6" fill="#fcfcfc" stroke="#3a3a3a" stroke-width="1.1"/></svg>
<svg class="a" style="left:381.6px;top:489px" width="6" height="4" viewBox="0 0 6 4"><path d="M0 0 H5.8 L2.9 3.3 Z" fill="#111"/></svg>
<svg class="a" style="left:217.5px;top:212.2px" width="8" height="9" viewBox="0 0 8 9"><path d="M6 0.8 L1.8 4.2 L6 7.6" fill="none" stroke="#484848" stroke-width="1.9"/></svg>
<svg class="a" style="left:1167px;top:212.2px" width="8" height="9" viewBox="0 0 8 9"><path d="M1.4 0.8 L5.6 4.2 L1.4 7.6" fill="none" stroke="#484848" stroke-width="1.9"/></svg>
<!--/ICONS-->
</body></html>
